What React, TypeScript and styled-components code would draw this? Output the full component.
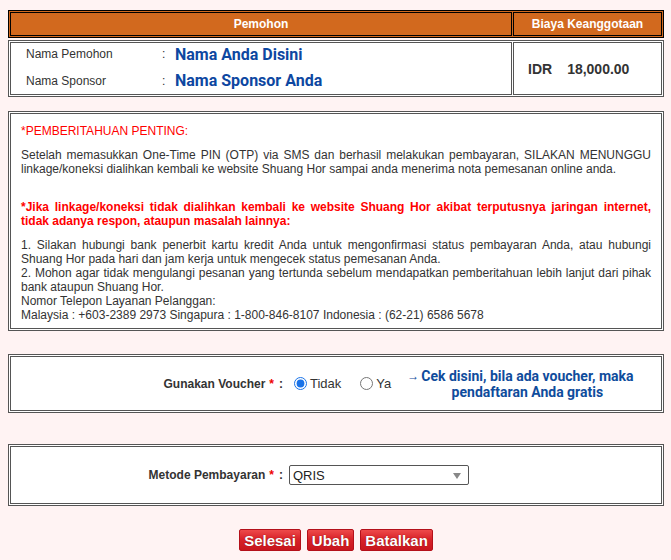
import React from 'react';
import styled, { createGlobalStyle } from 'styled-components';

const GlobalStyle = createGlobalStyle`
  body {
    margin: 10px 0 0 8px;
    background: #fff3f3;
    font-family: "Liberation Sans", Arial, sans-serif;
    color: #333;
  }
`;

const Page = styled.div`
  width: 656px;
`;

const HeaderBar = styled.div`
  display: flex;
  gap: 1px;
  padding: 1px;
  height: 28px;
  box-sizing: border-box;
  background: #d2691e;
  border: 1px solid #000;
`;

const HeadCell = styled.div<{ $width?: number }>`
  flex: ${(p) => (p.$width ? `0 0 ${p.$width}px` : '1')};
  box-sizing: border-box;
  display: flex;
  align-items: center;
  justify-content: center;
  border: 1px solid #000;
  color: #fff;
  font-size: 12px;
  font-weight: bold;
`;

const DoubleBox = styled.div<{ $top?: number; $height?: number }>`
  margin-top: ${(p) => p.$top ?? 0}px;
  ${(p) => (p.$height ? `height: ${p.$height}px;` : '')}
  box-sizing: border-box;
  display: flex;
  gap: 1px;
  padding: 1px;
  background: #fff;
  border: 1px solid #555;
`;

const Cell = styled.div<{ $width?: number }>`
  flex: ${(p) => (p.$width ? `0 0 ${p.$width}px` : '1')};
  border: 1px solid #555;
  box-sizing: border-box;
`;

const InfoGrid = styled.div`
  display: grid;
  grid-template-columns: 136px 13px auto;
  grid-template-rows: 22px 31px;
  align-items: center;
  padding-left: 15px;
`;

const InfoLabel = styled.span`
  font-size: 12px;
  color: #333;
`;

const InfoValue = styled.span`
  font-family: Roboto, "Noto Sans", sans-serif;
  font-weight: bold;
  font-size: 16px;
  color: #0d47a1;
`;

const FeeCell = styled(Cell)`
  display: flex;
  align-items: center;
  gap: 15px;
  padding-left: 14px;
  font-size: 14px;
  font-weight: bold;
  color: #333;
`;

const NoticeCell = styled(Cell)`
  padding: 10px 10px 6px;
  font-size: 12px;
  line-height: 14px;
  color: #333;
`;

const NoticeTitle = styled.div`
  color: #f00;
  margin-bottom: 10px;
`;

const Para = styled.div<{ $alert?: boolean; $gap?: number }>`
  text-align: justify;
  margin-bottom: ${(p) => p.$gap ?? 0}px;
  ${(p) => (p.$alert ? 'color: #f00; font-weight: bold;' : '')}
`;

const FormRow = styled.div`
  display: grid;
  grid-template-columns: 272px auto;
  column-gap: 6px;
  align-items: center;
  width: 100%;
`;

const FieldLabel = styled.div`
  text-align: right;
  font-size: 12px;
  font-weight: bold;
  color: #333;
`;

const Req = styled.span`
  color: #e00;
  margin: 0 5px 0 4px;
`;

const RadioGroup = styled.div`
  display: flex;
  align-items: center;
`;

const RadioLabel = styled.label`
  display: flex;
  align-items: center;
  font-size: 13px;
  color: #333;
  margin-right: 14px;

  input {
    margin: 0 3px 0 5px;
    width: 13px;
    height: 13px;
    accent-color: #1a73e8;
  }
`;

const Arrow = styled.span`
  align-self: flex-start;
  margin: 0 2px 0 2px;
  color: #0f4c9c;
  font-size: 12px;
  line-height: 16px;
`;

const VoucherLink = styled.div`
  flex-shrink: 0;
  white-space: nowrap;
  font-family: Roboto, "Noto Sans", sans-serif;
  font-weight: bold;
  font-size: 14px;
  line-height: 16px;
  color: #0f4c9c;
  text-align: center;
`;

const CenterCell = styled(Cell)`
  display: flex;
  align-items: center;
`;

const SelectWrap = styled.div`
  position: relative;
  width: 180px;
`;

const Select = styled.select`
  appearance: none;
  width: 100%;
  height: 20px;
  box-sizing: border-box;
  border: 1px solid #555;
  border-radius: 2px;
  background: #fff;
  padding: 0 3px;
  font-family: "Liberation Sans", Arial, sans-serif;
  font-size: 13px;
  color: #222;
`;

const Caret = styled.span`
  position: absolute;
  right: 8px;
  top: 8px;
  width: 0;
  height: 0;
  border-left: 4px solid transparent;
  border-right: 4px solid transparent;
  border-top: 6px solid #888;
  pointer-events: none;
`;

const ButtonBar = styled.div`
  display: flex;
  justify-content: center;
  gap: 6px;
  margin-top: 23px;
`;

const Button = styled.button`
  height: 22px;
  padding: 0 4px;
  border: 1px solid #b4101a;
  border-radius: 2px;
  background: linear-gradient(#ee4a4a, #d8232a 45%, #c8161e);
  color: #fff;
  font-family: "Liberation Sans", Arial, sans-serif;
  font-weight: bold;
  font-size: 15px;
  text-shadow: 0 0 1px #700;
  cursor: pointer;
`;

const App: React.FC = () => {
  return (
    <Page>
      <GlobalStyle />
      <HeaderBar>
        <HeadCell>Pemohon</HeadCell>
        <HeadCell $width={149}>Biaya Keanggotaan</HeadCell>
      </HeaderBar>

      <DoubleBox $top={2} $height={57}>
        <Cell>
          <InfoGrid>
            <InfoLabel>Nama Pemohon</InfoLabel>
            <InfoLabel>:</InfoLabel>
            <InfoValue>Nama Anda Disini</InfoValue>
            <InfoLabel>Nama Sponsor</InfoLabel>
            <InfoLabel>:</InfoLabel>
            <InfoValue>Nama Sponsor Anda</InfoValue>
          </InfoGrid>
        </Cell>
        <FeeCell $width={149}>
          <span>IDR</span>
          <span>18,000.00</span>
        </FeeCell>
      </DoubleBox>

      <DoubleBox $top={14}>
        <NoticeCell>
          <NoticeTitle>*PEMBERITAHUAN PENTING:</NoticeTitle>
          <Para $gap={24}>
            Setelah memasukkan One-Time PIN (OTP) via SMS dan berhasil melakukan pembayaran, SILAKAN MENUNGGU
            linkage/koneksi dialihkan kembali ke website Shuang Hor sampai anda menerima nota pemesanan online anda.
          </Para>
          <Para $alert $gap={10}>
            *Jika linkage/koneksi tidak dialihkan kembali ke website Shuang Hor akibat terputusnya jaringan internet,
            tidak adanya respon, ataupun masalah lainnya:
          </Para>
          <Para>
            1. Silakan hubungi bank penerbit kartu kredit Anda untuk mengonfirmasi status pembayaran Anda, atau hubungi
            Shuang Hor pada hari dan jam kerja untuk mengecek status pemesanan Anda.
          </Para>
          <Para>
            2. Mohon agar tidak mengulangi pesanan yang tertunda sebelum mendapatkan pemberitahuan lebih lanjut dari pihak
            bank ataupun Shuang Hor.
          </Para>
          <Para>Nomor Telepon Layanan Pelanggan:</Para>
          <Para>Malaysia : +603-2389 2973 Singapura : 1-800-846-8107 Indonesia : (62-21) 6586 5678</Para>
        </NoticeCell>
      </DoubleBox>

      <DoubleBox $top={23} $height={59}>
        <CenterCell>
          <FormRow>
            <FieldLabel>
              Gunakan Voucher<Req>*</Req>:
            </FieldLabel>
            <RadioGroup>
              <RadioLabel>
                <input type="radio" name="voucher" defaultChecked />
                Tidak
              </RadioLabel>
              <RadioLabel>
                <input type="radio" name="voucher" />
                Ya
              </RadioLabel>
              <Arrow>→</Arrow>
              <VoucherLink>
                Cek disini, bila ada voucher, maka
                <br />
                pendaftaran Anda gratis
              </VoucherLink>
            </RadioGroup>
          </FormRow>
        </CenterCell>
      </DoubleBox>

      <DoubleBox $top={31} $height={62}>
        <CenterCell>
          <FormRow>
            <FieldLabel>
              Metode Pembayaran<Req>*</Req>:
            </FieldLabel>
            <SelectWrap>
              <Select defaultValue="QRIS">
                <option value="QRIS">QRIS</option>
              </Select>
              <Caret />
            </SelectWrap>
          </FormRow>
        </CenterCell>
      </DoubleBox>

      <ButtonBar>
        <Button>Selesai</Button>
        <Button>Ubah</Button>
        <Button>Batalkan</Button>
      </ButtonBar>
    </Page>
  );
};

export default App;
